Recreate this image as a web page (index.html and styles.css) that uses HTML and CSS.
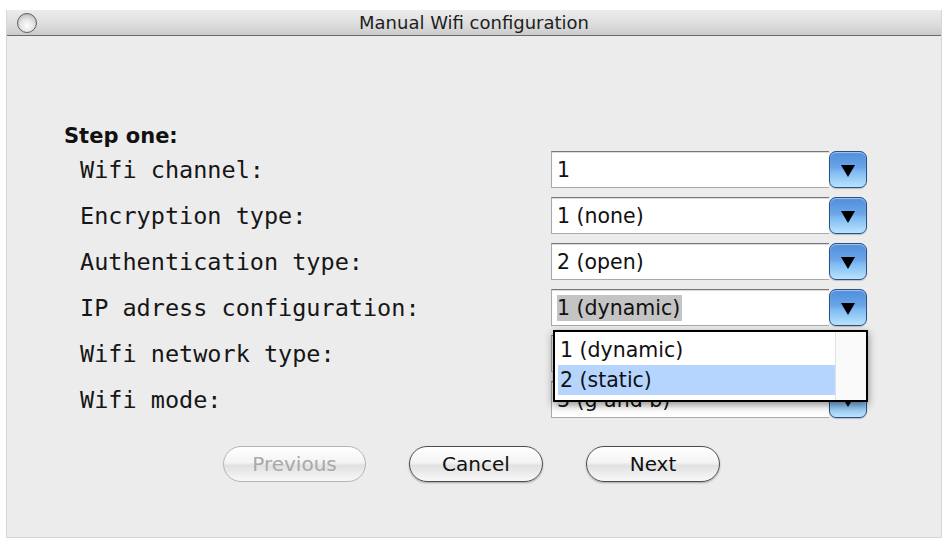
FILE: index.html
```html
<!DOCTYPE html>
<html lang="en">
<head>
    <meta charset="UTF-8">
    <title>Manual Wifi configuration</title>
    <link rel="stylesheet" href="styles.css">
</head>
<body>
    <div class="window">
        <!-- Title bar -->
        <div class="titlebar">
            <span class="close-dot"></span>
            <span class="title">Manual Wifi configuration</span>
        </div>

        <div class="content">
            <h2 class="step-title">Step one:</h2>

            <div class="form-grid">
                <label class="field-label">Wifi channel:</label>
                <div class="select">
                    <div class="select-field">1</div>
                    <div class="select-btn"><span class="arrow"></span></div>
                </div>

                <label class="field-label">Encryption type:</label>
                <div class="select">
                    <div class="select-field">1 (none)</div>
                    <div class="select-btn"><span class="arrow"></span></div>
                </div>

                <label class="field-label">Authentication type:</label>
                <div class="select">
                    <div class="select-field">2 (open)</div>
                    <div class="select-btn"><span class="arrow"></span></div>
                </div>

                <label class="field-label">IP adress configuration:</label>
                <div class="select">
                    <div class="select-field"><span class="selected-text">1 (dynamic)</span></div>
                    <div class="select-btn"><span class="arrow"></span></div>
                </div>

                <label class="field-label">Wifi network type:</label>
                <div class="select">
                    <!-- value hidden behind the open list -->
                    <div class="select-field"></div>
                    <div class="select-btn"><span class="arrow"></span></div>
                </div>

                <label class="field-label">Wifi mode:</label>
                <div class="select">
                    <div class="select-field">3 (g and b)</div>
                    <div class="select-btn"><span class="arrow"></span></div>
                </div>
            </div>

            <div class="button-row">
                <button class="pill-button disabled">Previous</button>
                <button class="pill-button">Cancel</button>
                <button class="pill-button">Next</button>
            </div>
        </div>

        <!-- Open dropdown of the IP adress select -->
        <div class="popup-list">
            <div class="popup-items">
                <div class="popup-item">1 (dynamic)</div>
                <div class="popup-item active">2 (static)</div>
            </div>
            <div class="popup-strip"></div>
        </div>
    </div>
</body>
</html>
```

FILE: styles.css
```css
body {
    margin: 0;
    background-color: #ffffff;
    font-family: "DejaVu Sans", "Liberation Sans", sans-serif;
}
.window {
    position: relative;
    width: 936px;
    height: 528px;
    margin: 10px 0 0 6px;
    background-color: #ececec;
    border: 1px solid #d6d6d6;
    border-top: none;
    box-sizing: border-box;
}
.titlebar {
    position: relative;
    height: 26px;
    display: flex;
    align-items: center;
    justify-content: center;
    background: linear-gradient(to bottom, #ececec 0%, #dcdcdc 60%, #cbcbcb 100%);
    border-bottom: 1px solid #6a6a6a;
    box-sizing: border-box;
}
.close-dot {
    position: absolute;
    left: 10px;
    top: 3px;
    width: 18px;
    height: 18px;
    border-radius: 50%;
    border: 1px solid #5e5e5e;
    background: radial-gradient(circle at 50% 65%, #ffffff 0%, #e4e4e4 45%, #a8a8a8 100%);
}
.title {
    font-size: 18px;
    color: #1e1e1e;
}
.content {
    padding: 0 0 0 57px;
}
.step-title {
    margin: 0;
    padding-top: 88px;
    font-size: 21px;
    line-height: 24px;
    font-weight: bold;
    color: #111;
}
.form-grid {
    display: grid;
    grid-template-columns: 471px 316px;
    grid-auto-rows: 37px;
    row-gap: 9px;
    margin: 3px 0 0 16px;
}
.field-label {
    font-family: "DejaVu Sans Mono", "Liberation Mono", monospace;
    font-size: 23.5px;
    color: #161616;
    display: flex;
    align-items: center;
}
.select {
    display: flex;
    align-items: stretch;
}
.select-field {
    flex: 1;
    display: flex;
    align-items: center;
    padding-left: 5px;
    background-color: #ffffff;
    border: 1px solid #a9a9a9;
    border-top-color: #777;
    border-right: none;
    box-shadow: inset 0 1px 1px rgba(0, 0, 0, 0.15);
    font-size: 20.5px;
    color: #111;
}
.selected-text {
    background-color: #c4c4c4;
    padding: 1px 2px 1px 0;
}
.select-btn {
    width: 36px;
    display: flex;
    align-items: center;
    justify-content: center;
    border: 1px solid #2c4f86;
    border-radius: 7px;
    background: linear-gradient(to bottom, #4f8edb 0%, #6aa5e8 45%, #7cb9f0 55%, #b9e3ff 100%);
    box-shadow: inset 0 1px 1px rgba(255, 255, 255, 0.5), 0 1px 1px rgba(0, 0, 0, 0.2);
}
.arrow {
    width: 0;
    height: 0;
    border-left: 7px solid transparent;
    border-right: 7px solid transparent;
    border-top: 12px solid #000;
    margin-top: 2px;
}
.button-row {
    display: flex;
    justify-content: center;
    gap: 43px;
    margin: 28px 62px 0 0;
}
.pill-button {
    height: 36px;
    width: 134px;
    border: 1px solid #4d4d4d;
    border-radius: 18px;
    background: linear-gradient(to bottom, #ffffff 0%, #f4f4f4 45%, #e1e1e1 55%, #f8f8f8 100%);
    box-shadow: 0 1px 2px rgba(0, 0, 0, 0.3);
    font-family: "DejaVu Sans", sans-serif;
    font-size: 20px;
    color: #111;
    padding: 0;
}
.pill-button.disabled {
    width: 143px;
    color: #a9a9a9;
    border-color: #b4b4b4;
    box-shadow: none;
}
.popup-list {
    position: absolute;
    left: 546px;
    top: 320px;
    width: 315px;
    height: 72px;
    display: flex;
    border: 2px solid #000;
    background-color: #ffffff;
    box-sizing: border-box;
    box-shadow: 0 3px 8px rgba(0, 0, 0, 0.45);
}
.popup-items {
    flex: 1;
    padding: 3px 0 0 3px;
}
.popup-item {
    height: 30px;
    line-height: 30px;
    padding-left: 2px;
    font-size: 20.5px;
    color: #111;
}
.popup-item.active {
    background-color: #b5d5ff;
}
.popup-strip {
    width: 30px;
    background-color: #fafafa;
    border-left: 1px solid #e2e2e2;
}
```
